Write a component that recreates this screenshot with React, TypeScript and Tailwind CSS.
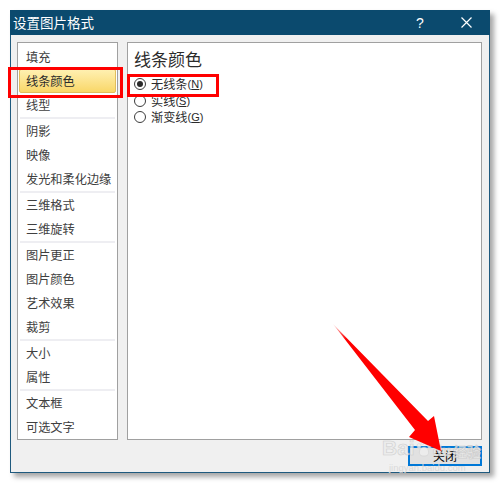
import React from 'react';

const groups: string[][] = [
  ['填充', '线条颜色', '线型'],
  ['阴影', '映像', '发光和柔化边缘'],
  ['三维格式', '三维旋转'],
  ['图片更正', '图片颜色', '艺术效果', '裁剪'],
  ['大小', '属性'],
  ['文本框', '可选文字'],
];

const radios = [
  { label: '无线条', key: 'N', checked: true },
  { label: '实线', key: 'S', checked: false },
  { label: '渐变线', key: 'G', checked: false },
];

const font = { fontFamily: '"Noto Sans CJK SC", "Noto Sans", sans-serif' };

const Radio: React.FC<{ checked: boolean }> = ({ checked }) => (
  <span className="w-[12px] h-[12px] rounded-full border border-[#3c3c3c] bg-white flex items-center justify-center shrink-0">
    {checked && <span className="w-[6px] h-[6px] rounded-full bg-[#2a2a2a]" />}
  </span>
);

// faint paw mark used by the watermark
const Paw = () => (
  <svg width="16" height="18" viewBox="0 0 16 18" className="mx-[1px] mb-[1px]">
    <g fill="#efefef" stroke="#cfcfcf" strokeWidth="0.6">
      <ellipse cx="3" cy="7" rx="2" ry="2.4" />
      <ellipse cx="6.5" cy="3" rx="2" ry="2.4" />
      <ellipse cx="10.5" cy="3" rx="2" ry="2.4" />
      <ellipse cx="13.5" cy="7" rx="2" ry="2.4" />
      <path d="M8 8 C4 8 2.5 13 4 15.5 C5.5 17.5 10.5 17.5 12 15.5 C13.5 13 12 8 8 8 Z" />
    </g>
  </svg>
);

export default function App() {
  return (
    <div className="relative w-[500px] h-[484px] bg-white overflow-hidden pt-[10px] pl-[10px]" style={font}>
      {/* Dialog */}
      <div className="w-[480px] h-[463px] flex flex-col shadow-[4px_4px_5px_rgba(0,0,0,0.35)]">
        {/* Title bar */}
        <div className="h-[25px] bg-[#0b4a6e] flex items-center pl-[3px] text-white shrink-0">
          <span className="text-[13.5px] leading-none">设置图片格式</span>
          <span className="ml-auto w-[20px] text-center text-[14px] leading-none mr-[31px]" style={{ fontFamily: '"Segoe UI", "Liberation Sans", sans-serif' }}>?</span>
          <svg className="mr-[18px]" width="11" height="11" viewBox="0 0 11 11">
            <path d="M0.5 0.5 L10.5 10.5 M10.5 0.5 L0.5 10.5" stroke="white" strokeWidth="1.2" />
          </svg>
        </div>

        {/* Body */}
        <div className="flex-1 bg-[#f0f0f0] border-x border-b border-[#1f5a7e] pl-[6px] pr-[7px] pt-[7px] flex flex-col">
          <div className="flex gap-[9px] h-[398px]">
            {/* Category list */}
            <div className="w-[101px] h-full bg-white border border-[#a0a0a0] pt-[2px]">
              {groups.map((g, gi) => (
                <div key={gi}>
                  {gi > 0 && <div className="h-[2px] mx-[2px] bg-[#eeeef2]" />}
                  {g.map((item) => (
                    <div key={item} className="h-[24px] px-[1px] flex items-center">
                      {item === '线条颜色' ? (
                        <div className="w-full h-[24px] flex items-center pl-[6px] rounded-[2px] border border-[#e2bd5c] bg-gradient-to-b from-[#fff0b0] to-[#f9d767] text-[12.2px] text-[#2b2b2b]">
                          {item}
                        </div>
                      ) : (
                        <span className="pl-[7px] text-[12.2px] text-[#404040]">{item}</span>
                      )}
                    </div>
                  ))}
                </div>
              ))}
            </div>

            {/* Right panel */}
            <div className="flex-1 h-full bg-white border border-[#a0a0a0] pl-[6px] pt-[5px]">
              <div className="text-[17px] leading-[22px] text-[#2b2b2b]">线条颜色</div>
              <div className="mt-[6px] flex flex-col">
                {radios.map((r) => (
                  <div key={r.key} className="h-[16.5px] flex items-center gap-[5px]">
                    <Radio checked={r.checked} />
                    <div className="h-[14px] flex items-center text-[12.2px] text-[#2b2b2b] leading-[14px]">
                      {r.label}
                      <span className="text-[11px]" style={{ fontFamily: '"Liberation Sans", sans-serif' }}>
                        (<span className="underline">{r.key}</span>)
                      </span>
                    </div>
                  </div>
                ))}
              </div>
            </div>
          </div>

          {/* Footer */}
          <div className="mt-[6px] flex justify-end">
            <button className="w-[74px] h-[20px] border-2 border-[#0078d7] bg-[#e1e1e1] text-[12px] text-black flex items-center justify-center leading-none">
              关闭
            </button>
          </div>
        </div>
      </div>

      {/* Annotation boxes */}
      <div className="absolute left-[8px] top-[67px] w-[115px] h-[31px] border-[3px] border-[#ff0000]" />
      <div className="absolute left-[127px] top-[74px] w-[92px] h-[23px] border-[3px] border-[#ff0000]" />

      {/* Watermark */}
      <div className="absolute left-[382px] top-[437px] flex items-end leading-none font-bold text-[#ececec] opacity-80" style={{ fontFamily: '"Liberation Sans", sans-serif', WebkitTextStroke: '0.6px #c8c8c8' }}>
        <span className="text-[21px]">Bai</span>
        <Paw />
        <span className="text-[15px]">du</span>
        <span className="text-[14px] ml-[2px]" style={font}>经验</span>
      </div>
      <div className="absolute left-[389px] top-[463px] text-[9.5px] leading-none text-[#dadada]" style={{ fontFamily: '"Liberation Sans", sans-serif' }}>
        jingyan.baidu.com
      </div>

      {/* Red arrow */}
      <svg className="absolute left-0 top-0 pointer-events-none" width="500" height="484" viewBox="0 0 500 484">
        <defs>
          <linearGradient id="arrowFade" x1="333" y1="324" x2="440" y2="450" gradientUnits="userSpaceOnUse">
            <stop offset="0" stopColor="#ff0000" stopOpacity="0.15" />
            <stop offset="0.12" stopColor="#ff0000" stopOpacity="1" />
            <stop offset="1" stopColor="#ff0000" stopOpacity="1" />
          </linearGradient>
        </defs>
        <polygon
          points="333,324 428,421 434,416 441,451 409,437 415,430"
          fill="url(#arrowFade)"
        />
      </svg>
    </div>
  );
}
